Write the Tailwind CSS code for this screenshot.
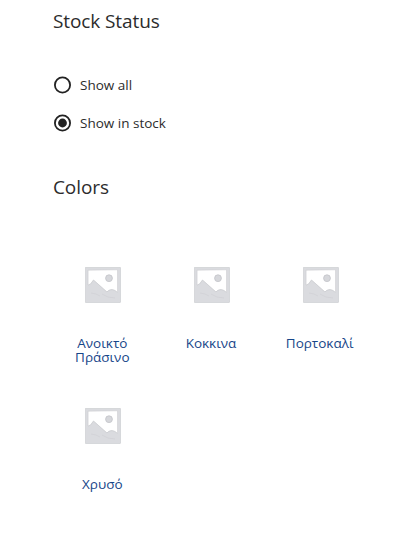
<!DOCTYPE html>
<html lang="en">
<head>
    <meta charset="UTF-8">
    <meta name="viewport" content="width=device-width, initial-scale=1.0">
    <script src="https://cdn.jsdelivr.net/npm/@tailwindcss/browser@4"></script>
    <title>Filters</title>
</head>
<body class="bg-white font-['Open_Sans','Noto_Sans',sans-serif] text-[#2c2c2c]">
    <svg class="hidden">
        <symbol id="placeholder" viewBox="0 0 36 36">
            <rect x="0.3" y="0.3" width="35.200" height="35.200" rx="0.500" fill="#dadbdf" stroke="#c8c9cd" stroke-width="0.600"/>
            <path d="M3.200 3.200L32.500 2.800V25.500C29 22 25 21.500 22 25L8.500 13L5.500 17L3.200 18Z" fill="#fff"/>
            <circle cx="24" cy="11.200" r="3.400" fill="#d6d7db" stroke="#c2c3c8" stroke-width="0.800"/>
            <path d="M3.200 18L5.500 17L8.500 13L22 25C25 21.500 29 22 32.500 25.500" fill="none" stroke="#c4c5ca" stroke-width="0.700"/>
            <path d="M3 18V3.200L32.500 2.800V25" fill="none" stroke="#c8c9cd" stroke-width="0.500"/>
            <path d="M6 26L11 27L15 29M17 27L23 30L30 31" fill="none" stroke="#d0d1d5" stroke-width="0.800"/>
        </symbol>
    </svg>
    <div class="pl-[52px] pt-[7px]">
        <h2 class="pl-px text-[19px] leading-7 tracking-[-0.1px]">Stock Status</h2>
        <div class="mt-[31px] flex flex-col">
            <label class="flex h-[38px] items-center text-[13.5px] leading-5">
                <svg class="mr-[8px] ml-px size-[19px]" viewBox="0 0 19 19" fill="none">
                    <circle cx="9.500" cy="9" r="7.600" stroke="#222" stroke-width="1.800"/>
                </svg>
                Show all
            </label>
            <label class="flex h-[38px] items-center text-[13.5px] leading-5">
                <svg class="mr-[8px] ml-px size-[19px]" viewBox="0 0 19 19" fill="none">
                    <circle cx="9.500" cy="9" r="7.600" stroke="#222" stroke-width="1.800"/>
                    <circle cx="9.500" cy="9" r="4.400" fill="#222"/>
                </svg>
                Show in stock
            </label>
        </div>
        <h2 class="mt-[31px] pl-px text-[19px] leading-7 tracking-[-0.1px]">Colors</h2>
    </div>
    <div class="ml-[48px] mt-[66px] grid w-[326px] grid-cols-3 gap-y-[51px] text-center text-[13.5px] leading-[14px] text-[#174689]">
        <a class="flex h-[90px] flex-col items-center">
            <svg class="ml-[2px] size-9 shrink-0"><use href="#placeholder"/></svg>
            <span class="mt-[33px] w-[70px]">Ανοικτό Πράσινο</span>
        </a>
        <a class="flex h-[90px] flex-col items-center">
            <svg class="ml-[2px] size-9 shrink-0"><use href="#placeholder"/></svg>
            <span class="mt-[33px]">Κοκκινα</span>
        </a>
        <a class="flex h-[90px] flex-col items-center">
            <svg class="ml-[2px] size-9 shrink-0"><use href="#placeholder"/></svg>
            <span class="mt-[33px]">Πορτοκαλί</span>
        </a>
        <a class="flex h-[90px] flex-col items-center">
            <svg class="ml-[2px] size-9 shrink-0"><use href="#placeholder"/></svg>
            <span class="mt-[33px]">Χρυσό</span>
        </a>
    </div>
</body>
</html>
